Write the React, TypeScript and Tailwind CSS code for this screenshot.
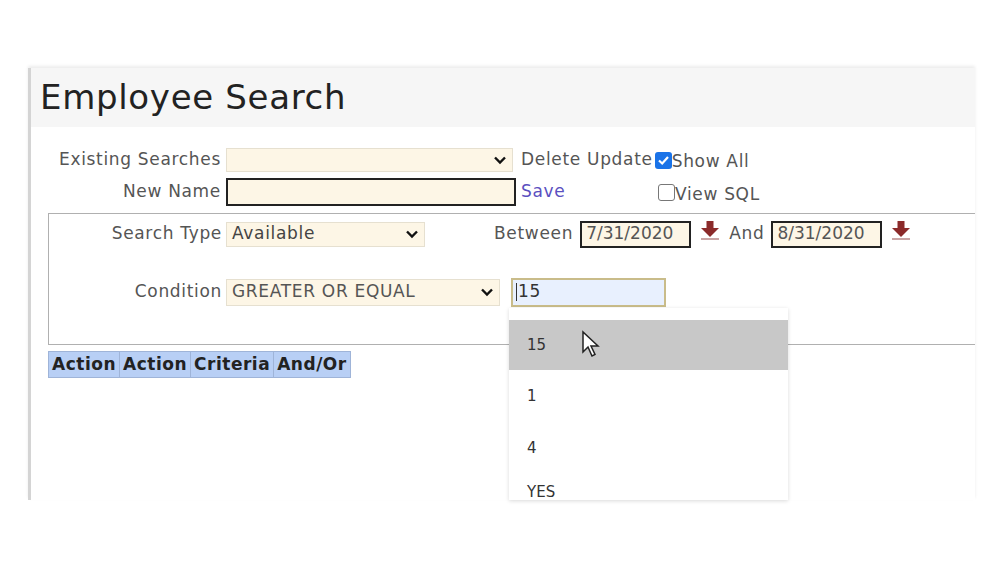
import React from "react";

const Chevron = () => (
  <svg width="14" height="10" viewBox="0 0 14 10" className="shrink-0">
    <path d="M2 2.5 L7 7.5 L12 2.5" stroke="#111" strokeWidth="2.4" fill="none" />
  </svg>
);

const Arrow = () => (
  <svg width="22" height="22" viewBox="0 0 22 22" className="shrink-0">
    <rect x="7.5" y="1" width="7" height="8" fill="#8b2a2a" />
    <path d="M2 8 L20 8 L11 17 Z" fill="#8b2a2a" />
    <rect x="2" y="18" width="18" height="2" fill="#c9a5a5" />
  </svg>
);

export default function App() {
  const f = { fontFamily: '"DejaVu Sans", Verdana, sans-serif' };
  return (
    <div className="w-[1000px] h-[574px] bg-white relative overflow-hidden text-[#333]" style={f}>
      <div className="absolute left-[28px] top-[272px] w-[3px] h-[36px] bg-[#3b6ea5]" />
      <div className="ml-[28px] mt-[68px] w-[947px] h-[432px] border-l-[3px] border-[#d4d4d4] shadow-[0_-2px_3px_rgba(0,0,0,0.08)] relative">
        <div className="h-[59px] bg-[#f6f6f6] flex items-center pl-[9px] text-[34px] tracking-[0.02em] text-[#222]">Employee Search</div>
        <div className="pt-[19px] text-[17px] tracking-[0.04em]">
          <div className="flex items-center h-[28px]">
            <div className="w-[190px] text-right text-[#555] whitespace-nowrap">Existing Searches</div>
            <div className="ml-[5px] w-[287px] h-[24px] bg-[#fdf6e6] border border-[#e6e0d0] flex items-center justify-end pr-[5px]"><Chevron /></div>
            <div className="ml-[8px] text-[#555] whitespace-nowrap">Delete Update</div>
            <div className="ml-[2px] w-[17px] h-[17px] bg-[#1a73e8] rounded-[3px] flex items-center justify-center shrink-0">
              <svg width="13" height="13" viewBox="0 0 13 13"><path d="M2 6.5 L5.2 9.5 L11 3" stroke="white" strokeWidth="2.2" fill="none" /></svg>
            </div>
            <div className="text-[#555] mt-[4px] whitespace-nowrap">Show All</div>
          </div>
          <div className="flex items-center h-[30px] mt-[3px]">
            <div className="w-[190px] text-right text-[#555]">New Name</div>
            <div className="ml-[5px] w-[290px] h-[28px] bg-[#fdf6e6] border-2 border-[#222]" />
            <div className="ml-[5px] w-[137px] text-[#5b4fc0]">Save</div>
            <div className="w-[17px] h-[17px] border border-[#777] rounded-[3px] bg-white shrink-0" />
            <div className="text-[#555] mt-[6px] whitespace-nowrap">View SQL</div>
          </div>
          <div className="ml-[17px] mt-[6px] h-[132px] border-t border-l border-b border-[#b0b0b0]">
            <div className="flex items-center h-[28px] mt-[6px]">
              <div className="w-[173px] text-right text-[#555] whitespace-nowrap">Search Type</div>
              <div className="ml-[4px] w-[199px] h-[25px] bg-[#fdf6e6] border border-[#e6e0d0] flex items-center justify-between px-[5px] text-[#444]">Available<Chevron /></div>
              <div className="ml-[69px] text-[#555]">Between</div>
              <div className="ml-[7px] w-[111px] h-[27px] bg-[#fdf6e6] border-2 border-[#222] flex items-center pl-[4px] text-[#555] tracking-normal">7/31/2020</div>
              <div className="ml-[8px] -mt-[6px]"><Arrow /></div>
              <div className="ml-[8px] text-[#555]">And</div>
              <div className="ml-[7px] w-[111px] h-[27px] bg-[#fdf6e6] border-2 border-[#222] flex items-center pl-[4px] text-[#555] tracking-normal">8/31/2020</div>
              <div className="ml-[8px] -mt-[6px]"><Arrow /></div>
            </div>
            <div className="flex items-center h-[28px] mt-[30px]">
              <div className="w-[173px] text-right text-[#555]">Condition</div>
              <div className="ml-[4px] w-[274px] h-[27px] bg-[#fdf6e6] border border-[#e6e0d0] flex items-center justify-between px-[5px] text-[#555] whitespace-nowrap">GREATER OR EQUAL<Chevron /></div>
              <div className="ml-[11px] w-[155px] h-[29px] bg-[#e8f0fe] border-2 border-[#c9bc8a] flex items-center pl-[3px] text-[#333]">
                <span className="w-px h-[18px] bg-[#333] mr-[1px]" />15
              </div>
            </div>
          </div>
          <div className="ml-[17px] mt-[6px] flex bg-[#b8cff5] border border-[#9fb4d8] w-fit font-bold text-[#222] h-[27px] items-center tracking-[0.03em]">
            <div className="px-[3px] border-r border-[#9fb4d8] h-full flex items-center">Action</div>
            <div className="px-[3px] border-r border-[#9fb4d8] h-full flex items-center">Action</div>
            <div className="px-[3px] border-r border-[#9fb4d8] h-full flex items-center">Criteria</div>
            <div className="px-[3px] h-full flex items-center">And/Or</div>
          </div>
        </div>
        <div className="absolute left-[478px] top-[240px] w-[279px] h-[192px] bg-white shadow-[0_1px_4px_rgba(0,0,0,0.15)] overflow-hidden text-[15px] text-[#333]">
          <div className="mt-[12px] h-[50px] bg-[#c8c8c8] flex items-center pl-[18px] relative">15
            <svg className="absolute left-[72px] top-[10px]" width="20" height="28" viewBox="0 0 20 28"><path d="M2 2 L2 22 L7 17 L11 26 L14 24.5 L10 16 L17 16 Z" fill="white" stroke="#222" strokeWidth="1.5" /></svg>
          </div>
          <div className="h-[52px] flex items-center pl-[18px]">1</div>
          <div className="h-[52px] flex items-center pl-[18px]">4</div>
          <div className="h-[26px] flex items-end pl-[18px] leading-none">YES</div>
        </div>
      </div>
    </div>
  );
}
